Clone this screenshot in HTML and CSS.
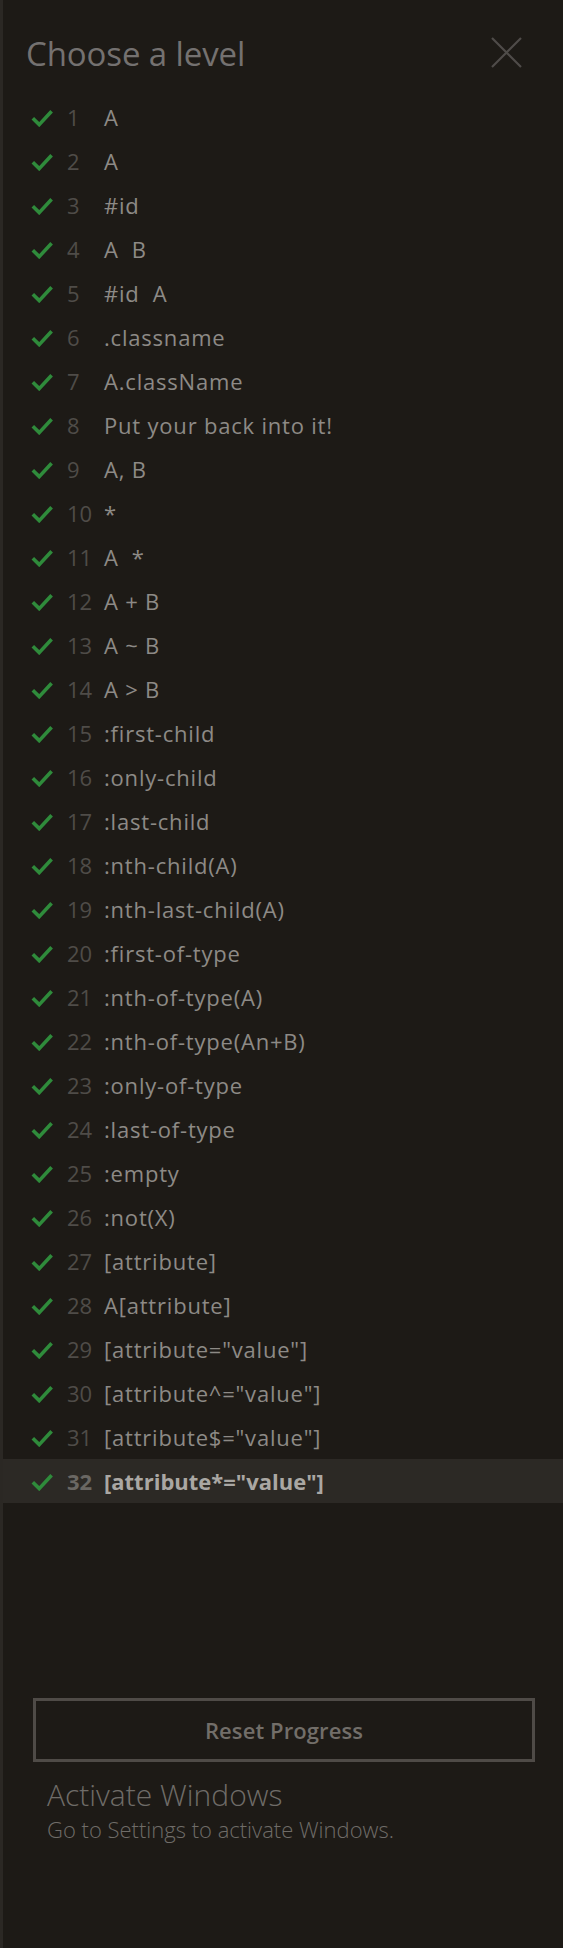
FILE: index.html
```html
<!DOCTYPE html>
<html lang="en">
<head>
<meta charset="utf-8">
<title>Choose a level</title>
<link rel="stylesheet" href="styles.css">
</head>
<body>
<div class="panel">
  <header class="head">
    <h2 class="title">Choose a level</h2>
    <svg class="close" width="31" height="31" viewBox="0 0 31 31" aria-label="Close"><path d="M1 1 L30 30 M30 1 L1 30" stroke="currentColor" stroke-width="2.2" fill="none"/></svg>
  </header>
  <ol class="levels" id="levels"></ol>
  <button class="reset">Reset Progress</button>
  <div class="activate">
    <div class="act-title">Activate Windows</div>
    <div class="act-sub">Go to Settings to activate Windows.</div>
  </div>
</div>
<script>
var items=["A","A","#id","A&nbsp; B","#id&nbsp; A",".classname","A.className","Put your back into it!","A, B","*","A&nbsp; *","A + B","A ~ B","A &gt; B",":first-child",":only-child",":last-child",":nth-child(A)",":nth-last-child(A)",":first-of-type",":nth-of-type(A)",":nth-of-type(An+B)",":only-of-type",":last-of-type",":empty",":not(X)","[attribute]","A[attribute]","[attribute=\"value\"]","[attribute^=\"value\"]","[attribute$=\"value\"]","[attribute*=\"value\"]"];
var check='<svg class="check" width="22" height="18" viewBox="0 0 22 18"><path d="M1.8 9.2 L8.2 15.6 L20.6 2.2" stroke="currentColor" stroke-width="3.6" fill="none"/></svg>';
var html="";
items.forEach(function(t,i){
  html+='<li class="level'+(i===31?' current':'')+'">'+check+'<span class="num">'+(i+1)+'</span><span class="sel">'+t+'</span></li>';
});
document.getElementById("levels").innerHTML=html;
</script>
</body>
</html>
```
FILE: styles.css
```css
html, body {
  margin: 0;
  padding: 0;
  background: #1d1a16;
}
body {
  min-height: 1948px;
  border-left: 3px solid #2b2824;
  font-family: "Open Sans", "Noto Sans", sans-serif;
  box-sizing: border-box;
}
.panel {
  display: flex;
  flex-direction: column;
}
.head {
  display: flex;
  justify-content: space-between;
  align-items: flex-start;
  padding: 34px 41px 0 23px;
  height: 61px;
}
.title {
  margin: 0;
  font-size: 33px;
  font-weight: 400;
  line-height: 40px;
  color: #747170;
  letter-spacing: -0.1px;
}
.close {
  color: #4f4c49;
  margin-top: 3px;
}
.levels {
  list-style: none;
  margin: 0;
  padding: 0;
}
.level {
  display: flex;
  align-items: center;
  height: 44px;
  padding-left: 28px;
  font-size: 22px;
  color: #8d8a86;
  letter-spacing: 0.8px;
}
.check {
  color: #2f8b3b;
  flex: none;
  margin-top: 2px;
}
.num {
  width: 37px;
  margin-left: 14px;
  color: #4f4c48;
  flex: none;
  letter-spacing: 0;
}
.sel {
  white-space: nowrap;
}
.level.current {
  background: #2c2925;
  font-weight: 700;
  color: #aaa7a3;
  letter-spacing: 0;
}
.level.current .num {
  color: #6a6763;
}
.reset {
  margin: 195px 0 0 30px;
  width: 502px;
  height: 64px;
  background: transparent;
  border: 3px solid #4f4b47;
  color: #726e69;
  font-family: "Open Sans", "Noto Sans", sans-serif;
  font-size: 22px;
  font-weight: 600;
  letter-spacing: 0.1px;
  cursor: pointer;
}
.activate {
  padding: 14px 0 0 44px;
  color: #6f6c68;
}
.act-title {
  font-size: 30px;
  font-weight: 300;
  line-height: 38px;
}
.act-sub {
  font-size: 22px;
  font-weight: 300;
  line-height: 30px;
}
```
